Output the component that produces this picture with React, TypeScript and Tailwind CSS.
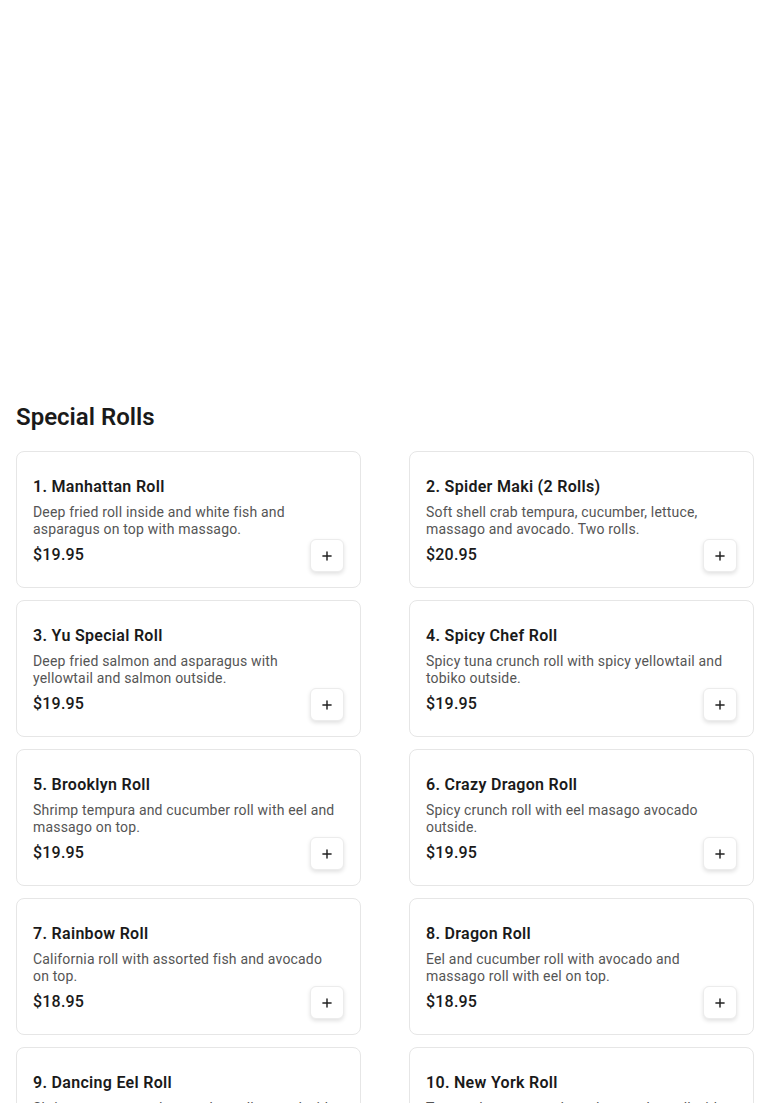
import { Plus } from 'lucide-react'

type Roll = {
    name: string
    desc: string
    price: string
}

const rolls: Roll[] = [
    { name: '1. Manhattan Roll', desc: 'Deep fried roll inside and white fish and asparagus on top with massago.', price: '$19.95' },
    { name: '2. Spider Maki (2 Rolls)', desc: 'Soft shell crab tempura, cucumber, lettuce, massago and avocado. Two rolls.', price: '$20.95' },
    { name: '3. Yu Special Roll', desc: 'Deep fried salmon and asparagus with yellowtail and salmon outside.', price: '$19.95' },
    { name: '4. Spicy Chef Roll', desc: 'Spicy tuna crunch roll with spicy yellowtail and tobiko outside.', price: '$19.95' },
    { name: '5. Brooklyn Roll', desc: 'Shrimp tempura and cucumber roll with eel and massago on top.', price: '$19.95' },
    { name: '6. Crazy Dragon Roll', desc: 'Spicy crunch roll with eel masago avocado outside.', price: '$19.95' },
    { name: '7. Rainbow Roll', desc: 'California roll with assorted fish and avocado on top.', price: '$18.95' },
    { name: '8. Dragon Roll', desc: 'Eel and cucumber roll with avocado and massago roll with eel on top.', price: '$18.95' },
    { name: '9. Dancing Eel Roll', desc: 'Shrimp tempura and cucumber roll topped with eel and avocado.', price: '$19.95' },
    { name: '10. New York Roll', desc: 'Tuna, salmon, avocado and cucumber roll with tobiko on top.', price: '$19.95' },
]

function RollCard({ roll }: { roll: Roll }) {
    return (
        <div className="rounded-lg border border-[#e6e6e6] bg-white pt-[23px] pb-[15px] px-4">
            <h3 className="text-base leading-6 font-semibold tracking-[0.3px] text-[#1a1a1a]">{roll.name}</h3>
            <p className="mt-[5px] pr-2 text-sm leading-[17px] tracking-[0.18px] text-[#555555]">{roll.desc}</p>
            <div className="mt-[1px] flex items-center justify-between">
                <span className="-mt-[2px] text-base leading-6 font-medium tracking-[0.2px] text-[#1a1a1a]">{roll.price}</span>
                <button className="flex h-[33px] w-[34px] items-center justify-center rounded-md border border-[#ececec] bg-white shadow-[0_2px_4px_rgba(0,0,0,0.12)]">
                    <Plus className="h-[14px] w-[14px] text-[#222]" strokeWidth={2.5} />
                </button>
            </div>
        </div>
    )
}

export default function App() {
    return (
        <div className="min-h-screen bg-white font-['Roboto',sans-serif]">
            <div className="h-[401px]" />
            <div className="px-4">
                <h2 className="text-2xl leading-8 font-semibold text-[#1a1a1a]">Special Rolls</h2>
                <div className="mt-[18px] grid grid-cols-2 gap-x-12 gap-y-3">
                    {rolls.map((r) => (
                        <RollCard key={r.name} roll={r} />
                    ))}
                </div>
            </div>
        </div>
    )
}
